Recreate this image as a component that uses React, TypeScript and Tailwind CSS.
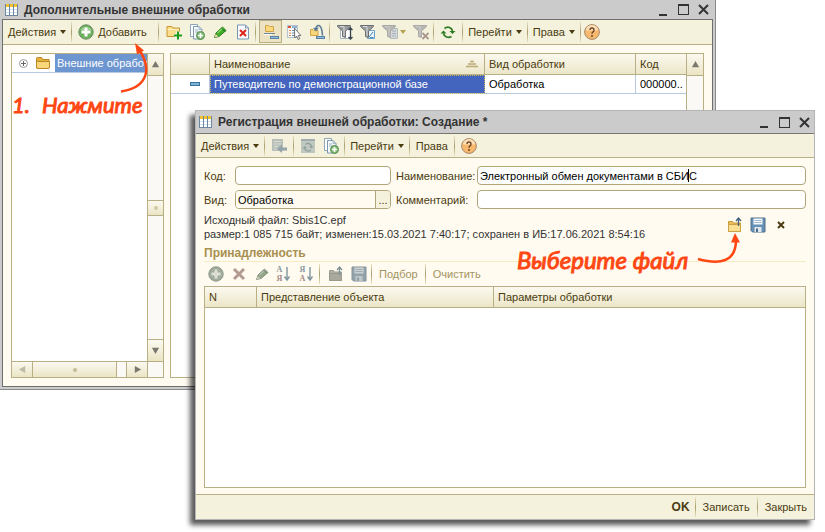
import type { ReactNode } from "react";

const iconBox = "h-4 w-4 shrink-0";

function GridIcon() {
  return (
    <svg className={iconBox} viewBox="0 0 16 16" aria-hidden="true">
      {[2, 6, 10].map((x) => (
        <g key={x}>
          <rect x={x - 0.5} y="2.5" width="4" height="11" fill="#fff" stroke="#6d87a0" />
          <rect x={x} y="2" width="3" height="3" fill="#f2c230" />
          <path d={`M${x} 7.5h3M${x} 10.500h3`} stroke="#d4e4f0" />
        </g>
      ))}
    </svg>
  );
}

function AddIcon({ muted = false }: { muted?: boolean }) {
  return (
    <svg className={iconBox} viewBox="0 0 16 16" aria-hidden="true">
      <circle cx="8" cy="8" r="7.2" fill={muted ? "#a3ab9c" : "#6cb15e"} stroke={muted ? "#8f978c" : "#6d8d66"} />
      {!muted && <path d="M2.5 6a6 5 0 0 1 11 0Z" fill="#b5dba9" opacity=".7" />}
      <path d="M8 3.5v9M3.5 8h9" stroke={muted ? "#dde0d6" : "#fff"} strokeWidth="3" />
    </svg>
  );
}

function FolderIcon() {
  return (
    <svg className={iconBox} viewBox="0 0 16 16" aria-hidden="true">
      <path d="M1.5 13V3.5q0-1 1-1h4l1.500 2h6V13Z" fill="#e5b13d" stroke="#b98724" />
      <path d="M1.500 6.500h13v5.500q0 1.500-1.500 1.500H3q-1.500 0-1.500-1.500Z" fill="#fbd77b" stroke="#b98724" />
    </svg>
  );
}

function FolderAddIcon() {
  return (
    <svg className={iconBox} viewBox="0 0 16 16" aria-hidden="true">
      <path d="M1 12.500V2.500h5l1 1.500h6.500v8.500Z" fill="#fbdd8c" stroke="#c8962f" />
      <path d="M1.500 5.500h11.500" stroke="#fff0bd" />
      <path d="M12 7.500v8M8 11.500h8" stroke="#f5f1de" strokeWidth="4" />
      <path d="M12 7.500v8M8 11.500h8" stroke="#1e9b1e" strokeWidth="2" />
    </svg>
  );
}

function CopyAddIcon() {
  return (
    <svg className={iconBox} viewBox="0 0 16 16" aria-hidden="true">
      <path d="M1.500.5h7v12h-7Z" fill="#fff" stroke="#8ea6b8" />
      <path d="M4.500 2.500h5.500l3 3v9.500H4.500Z" fill="#f4f8fb" stroke="#7c99ae" />
      <path d="M10 2.500v3h3M6 6h3M6 8h4" fill="none" stroke="#9fb6c6" />
      <circle cx="11.500" cy="11.500" r="4" fill="#7dba6f" stroke="#5c9157" />
      <path d="M11.500 9v5M9 11.500h5" stroke="#fff" strokeWidth="1.700" />
    </svg>
  );
}

function PencilIcon({ muted = false }: { muted?: boolean }) {
  return (
    <svg className={iconBox} viewBox="0 0 16 16" aria-hidden="true">
      <path d="M2.500 13.500 4 9l6.500-6 3.500 3.500-7 6Z" fill={muted ? "#93a58b" : "#3faa2c"} stroke={muted ? "#87977f" : "#267d19"} />
      <path d="m5.500 9 5.500-5" stroke={muted ? "#b2beaa" : "#8cdc71"} strokeWidth="1.300" />
      <path d="m2.500 13.500 1-3.500 3 2.500Z" fill={muted ? "#c6c8bd" : "#ead2a1"} />
      <path d="m9.500 4 3.500 3.500" stroke={muted ? "#75866e" : "#1d6c14"} />
    </svg>
  );
}

function DeleteIcon() {
  return (
    <svg className={iconBox} viewBox="0 0 16 16" aria-hidden="true">
      <path d="M2.500 1h8l3 3v11h-11Z" fill="#f7fbff" stroke="#7797b2" />
      <path d="M10.500 1v3h3" fill="none" stroke="#7797b2" />
      <path d="m5 6 6 6M11 6l-6 6" stroke="#dc2416" strokeWidth="2" />
    </svg>
  );
}

function HierarchyIcon() {
  return (
    <svg className={iconBox} viewBox="0 0 16 16" aria-hidden="true">
      <path d="M2.500 1.500h3l1 1h4v5h-8Z" fill="#fbd77b" stroke="#d0a548" />
      <path d="M1 9.500h11" stroke="#6f8290" />
      <path d="M1 10.500h8" stroke="#fff" />
      <rect x="7.500" y="12.500" width="8" height="2" fill="#8fbbe0" stroke="#5a83a5" />
    </svg>
  );
}

function ListCursorIcon() {
  return (
    <svg className={iconBox} viewBox="0 0 16 16" aria-hidden="true">
      <rect x="1.500" y="1.500" width="10" height="12" fill="#f4f8fb" stroke="#b4c3cf" />
      <path d="M2 3h3" stroke="#d9583b" strokeWidth="2" />
      <path d="M6 3h5" stroke="#8fb4d3" strokeWidth="2" />
      <path d="M3 6.500h2M3 9h2M3 11.500h2" stroke="#e08a4a" />
      <path d="M6 6.500h5M6 9h4M6 11.500h3" stroke="#6c8ca5" />
      <path d="m8.500 4 .2 10 2-2 1.500 3.500 1.600-.8-1.500-3.200h2.500Z" fill="#fff" stroke="#555" strokeWidth=".8" />
    </svg>
  );
}

function MoveGroupIcon() {
  return (
    <svg className={iconBox} viewBox="0 0 16 16" aria-hidden="true">
      <path d="M1.500 5.500h2.500l1 1h4v5H1.500Z" fill="#fbd77b" stroke="#d0a548" />
      <path d="M7 4.500Q7.500 1 10 1.500q2.800.5 3.500 10" fill="none" stroke="#5b7b93" strokeWidth="1.600" />
      <path d="m4 4 6-.5-3 4Z" fill="#5b7b93" />
      <rect x="7.500" y="12.500" width="8" height="2" fill="#8fbbe0" stroke="#5a83a5" />
    </svg>
  );
}

function FilterIcon({ kind }: { kind: "sort" | "current" | "history" | "clear" }) {
  const muted = kind === "history" || kind === "clear";
  return (
    <svg className={iconBox} viewBox="0 0 16 16" aria-hidden="true">
      {kind === "sort" && <path d="M3.500 3.500h10v11h-10Z" fill="#fff" stroke="#a4b4c0" />}
      {kind === "current" && <path d="M7.500 6.500h7v8h-7Z" fill="#eef6fc" stroke="#6b9fc9" />}
      {kind === "history" && <path d="M8.500 4.500h7v10h-7Z" fill="#d6dadb" stroke="#b4bbbe" />}
      {kind === "history" && <path d="M10 7h4M10 9.500h4M10 12h4" stroke="#a2adb3" />}
      <path d="M.5 1.500h13v1L8.500 7v6.500l-3-1V7L.5 2.500Z" fill={muted ? "#b7b7b5" : "#9a9c9e"} stroke={muted ? "#a8a8a6" : "#6b6d70"} />
      <path d="M3 2.500h4L7 7v5" fill="none" stroke={muted ? "#cccbc7" : "#d8dcdc"} />
      {kind === "sort" && <path d="M13.500 4v11M11.500 6l2-2 2 2M11.500 13l2 2 2-2" fill="none" stroke="#33414d" strokeWidth="1.300" />}
      {kind === "current" && <path d="m9 13 4-5M10 13.500h3.500" stroke="#4285bb" />}
      {kind === "clear" && <path d="m9.500 9 6 6M15.500 9l-6 6" stroke="#a8968f" strokeWidth="1.800" />}
    </svg>
  );
}

function RefreshIcon({ muted = false }: { muted?: boolean }) {
  const c = muted ? "#8b9f9b" : "#2c7a22";
  return (
    <svg className={iconBox} viewBox="0 0 16 16" aria-hidden="true">
      {muted && <rect x="1" y="1" width="14" height="14" fill="#bfc7c0" />}
      {muted && <path d="M1 2h14" stroke="#a2adac" strokeWidth="2" />}
      <g transform={muted ? "translate(2 3) scale(.75)" : undefined}>
        <path d="M4.500 4.500Q7 2.500 9.500 3.500T12.500 7M11.500 12.500Q9 14 6.500 13T3.500 9.500" fill="none" stroke={c} strokeWidth="1.700" />
        <path d="M9.500 7H15.500L12.500 10ZM6.500 9.500H.5L3.500 6.500Z" fill={c} />
      </g>
    </svg>
  );
}

function HelpIcon() {
  return (
    <svg className={iconBox} viewBox="0 0 16 16" aria-hidden="true">
      <circle cx="8" cy="8" r="7.400" fill="#f8b96e" stroke="#a8876a" />
      <path d="M2 6.500a6 5.500 0 0 1 12 0Z" fill="#fde0b8" />
      <path d="M6 6q0-2 2-2t2 2Q10 7.300 9 8q-1 .5-1 1.800" fill="none" stroke="#6b4628" strokeWidth="1.400" />
      <circle cx="8" cy="12" r="1" fill="#6b4628" />
    </svg>
  );
}

function WriteBackIcon() {
  return (
    <svg className={iconBox} viewBox="0 0 16 16" aria-hidden="true">
      <path d="M1 1h11v12H1Z" fill="#b9c0ba" />
      <path d="M3 3.500h7M3 6h7M3 8.500h4M3 11h3" stroke="#d8dcd3" />
      <path d="M16 9.500h-5V6.500L6 11l5 4v-2.500h5Z" fill="#95a4ab" />
    </svg>
  );
}

function OpenFolderIcon({ muted = false }: { muted?: boolean }) {
  return (
    <svg className={iconBox} viewBox="0 0 16 16" aria-hidden="true">
      <path d="M1.500 14.500v-10h4l1 1.500h7v8.500Z" fill={muted ? "#b2b2a4" : "#e9bd57"} stroke={muted ? "#9b9d90" : "#c6993b"} />
      <path d="M1.500 7.500h12v7h-12Z" fill={muted ? "#a9aa9d" : "#fbdf92"} stroke={muted ? "#989a8e" : "#cda044"} />
      <path d="M11.500 9V1.500M9 4l2.500-3L14 4" fill="none" stroke={muted ? "#7e9094" : "#3f617c"} strokeWidth="1.300" />
    </svg>
  );
}

function SaveIcon({ muted = false }: { muted?: boolean }) {
  return (
    <svg className={iconBox} viewBox="0 0 16 16" aria-hidden="true">
      <path d="M1 1h14v14H2.500L1 13.500Z" fill={muted ? "#93a3ab" : "#6690b5"} stroke={muted ? "#81929a" : "#4f6f8c"} />
      <path d="M3.500 1.500h9v6h-9Z" fill={muted ? "#ccd3d2" : "#f5f9fc"} />
      <path d="M4.500 3.500h7M4.500 5.500h7" stroke={muted ? "#9eabb0" : "#9fb9cf"} />
      <path d="M4.500 10h7v5h-7Z" fill={muted ? "#c1c9c8" : "#e2e8ec"} />
      <path d="M6 11.500h2V15H6Z" fill={muted ? "#8fa0a7" : "#496e8d"} />
    </svg>
  );
}

function CrossIcon() {
  return (
    <svg className={iconBox} viewBox="0 0 16 16" aria-hidden="true">
      <path d="m3 3 10 10M13 3 3 13" stroke="#b39a90" strokeWidth="3" />
    </svg>
  );
}

function SortIcon({ first, second }: { first: string; second: string }) {
  return (
    <span className="flex h-[18px] w-4 items-center">
      <span className="flex flex-col font-['Liberation_Serif',serif] text-[8px] leading-[9px] font-bold">
        <span className="text-[#8797a0]">{first}</span>
        <span className="text-[#a48a86]">{second}</span>
      </span>
      <svg className="ml-px h-4 w-2" viewBox="0 0 8 16" aria-hidden="true">
        <path d="M4 1v12M1.500 10.500 4 14l2.500-3.500" fill="none" stroke="#7f969f" strokeWidth="1.400" />
      </svg>
    </span>
  );
}

function Caret() {
  return <span className="border-x-3 border-t-4 border-x-transparent border-t-[#4a3c10]" />;
}

function Separator() {
  return <span className="h-5 w-px shrink-0 bg-linear-to-b from-[#e9e3c4] via-[#a99d6b] to-[#e9e3c4]" />;
}

function IconButton({ label, children, width = "w-[23px]" }: { label: string; children: ReactNode; width?: string }) {
  return (
    <button type="button" aria-label={label} className={`flex h-6 shrink-0 items-center justify-center ${width}`}>
      {children}
    </button>
  );
}

function MenuButton({ children, caret = false, pad = "px-[5px]" }: { children: ReactNode; caret?: boolean; pad?: string }) {
  return (
    <button type="button" className={`flex h-6 items-center gap-1 whitespace-nowrap ${pad}`}>
      {children}
      {caret && <Caret />}
    </button>
  );
}

function TitleBar({ title, height }: { title: string; height: string }) {
  return (
    <header className={`flex shrink-0 items-center bg-[#cbcbcb] pl-[2px] text-[#333] ${height}`}>
      <GridIcon />
      <h1 className="ml-1 flex-1 text-[12px] font-bold whitespace-nowrap">{title}</h1>
      <button type="button" aria-label="Свернуть" className="flex h-4 w-5 items-end justify-center pb-[2px]">
        <span className="h-[2px] w-2 bg-[#333]" />
      </button>
      <button type="button" aria-label="Развернуть" className="flex h-4 w-5 items-center justify-center">
        <span className="h-[11px] w-[11px] border border-t-2 border-[#333]" />
      </button>
      <button type="button" aria-label="Закрыть окно" className="flex h-4 w-5 items-center justify-center">
        <svg className="h-[11px] w-[11px]" viewBox="0 0 11 11"><path d="m1 1 9 9M10 1l-9 9" stroke="#333" strokeWidth="2" /></svg>
      </button>
    </header>
  );
}

const headFill = "bg-linear-to-b from-[#fbf9f0] to-[#ebe5c5]";
const line = "border-[#b9af85]";

function ScrollButton({ dir, faded = false }: { dir: "up" | "down" | "left" | "right"; faded?: boolean }) {
  const paths = { up: "M5 1 9 8H1Z", down: "M1 2h8L5 9Z", left: "M8 1v8L1 5Z", right: "M2 1v8l7-4Z" };
  const vertical = dir === "up" || dir === "down";
  return (
    <button type="button" aria-label={`Прокрутка: ${dir}`} className={`flex shrink-0 items-center justify-center ${headFill} ${line} ${vertical ? "h-[22px] w-full" : "h-full w-[21px]"} ${dir === "up" ? "border-b" : ""} ${dir === "down" ? "border-t" : ""} ${dir === "left" ? "border-r" : ""} ${dir === "right" ? "border-l" : ""}`}>
      <svg className="h-[9px] w-[9px]" viewBox="0 0 10 10"><path d={paths[dir]} fill={faded ? "#bdb9a2" : "#7a776c"} /></svg>
    </button>
  );
}

function ListWindow() {
  return (
    <section className="absolute top-0 right-[109px] left-0 flex h-[390px] flex-col border-r border-b border-[#8a8a8a] bg-[#cbcbcb] pr-[2px] pb-[2px] pl-[2px]">
      <TitleBar title="Дополнительные внешние обработки" height="h-[19px]" />
      <div className="flex min-h-0 flex-1 flex-col border border-[#6f6f6f] bg-[#fffbf0]">
        <div className={`flex h-[25px] shrink-0 items-center border-b bg-[#f4f1dd] ${line}`}>
          <MenuButton caret>Действия</MenuButton>
          <Separator />
          <button type="button" className="flex h-6 w-[86px] items-center gap-1 pl-[6px]">
            <AddIcon />
            <span><span className="underline">Д</span>обавить</span>
          </button>
          <Separator />
          <div className="flex pr-px pl-[3px]">
            <IconButton label="Новая группа"><FolderAddIcon /></IconButton>
            <IconButton label="Скопировать"><CopyAddIcon /></IconButton>
            <IconButton label="Изменить"><PencilIcon /></IconButton>
            <IconButton label="Удалить"><DeleteIcon /></IconButton>
          </div>
          <Separator />
          <div className="flex pr-px pl-[3px]">
            <button type="button" aria-label="Иерархический просмотр" aria-pressed="true" className={`flex h-[23px] w-[23px] items-center justify-center border bg-[#ebe3c3] ${line}`}>
              <HierarchyIcon />
            </button>
            <IconButton label="Выбрать"><ListCursorIcon /></IconButton>
            <IconButton label="Переместить в группу"><MoveGroupIcon /></IconButton>
          </div>
          <Separator />
          <div className="flex pr-px pl-[3px]">
            <IconButton label="Отбор и сортировка"><FilterIcon kind="sort" /></IconButton>
            <IconButton label="Отбор по значению"><FilterIcon kind="current" /></IconButton>
            <IconButton label="История отборов" width="w-[30px]"><FilterIcon kind="history" /><span className="ml-[2px] border-x-3 border-t-4 border-x-transparent border-t-[#b3a050]" /></IconButton>
            <IconButton label="Отключить отбор"><FilterIcon kind="clear" /></IconButton>
          </div>
          <Separator />
          <IconButton label="Обновить" width="w-[28px]"><RefreshIcon /></IconButton>
          <Separator />
          <MenuButton caret>Перейти</MenuButton>
          <Separator />
          <MenuButton caret>Права</MenuButton>
          <Separator />
          <IconButton label="Справка"><HelpIcon /></IconButton>
        </div>

        <div className="flex min-h-0 flex-1 gap-[6px] px-2 pt-2 pb-2">
          <div className={`flex w-[153px] shrink-0 flex-col border bg-white ${line}`}>
            <div className="flex min-h-0 flex-1">
              <div className="min-w-0 flex-1">
                <div className="flex h-[19px] items-center border-b border-[#b6c8e2]">
                  <svg className="ml-[7px] h-[9px] w-[9px] shrink-0" viewBox="0 0 9 9"><circle cx="4.500" cy="4.500" r="4" fill="#fff" stroke="#999" /><path d="M2 4.500h5M4.500 2v5" stroke="#666" /></svg>
                  <span className="ml-[7px] flex"><FolderIcon /></span>
                  <span className="ml-1 h-full min-w-0 flex-1 overflow-hidden bg-[#6d96d0] pl-[2px] leading-[18px] whitespace-nowrap text-white">Внешние обработки</span>
                </div>
              </div>
              <div className={`flex w-4 flex-col border-l bg-[#faf9f5] ${line}`}>
                <ScrollButton dir="up" />
                <div className="flex-1" />
                <div className={`h-4 border-y ${line} ${headFill} flex items-center justify-center`}><span className="h-1 w-1 rounded-full bg-[#cfc9a8]" /></div>
                <div className="flex-1" />
                <ScrollButton dir="down" />
              </div>
            </div>
            <div className={`flex h-4 border-t bg-[#faf9f5] ${line}`}>
              <ScrollButton dir="left" faded />
              <div className={`flex w-[84px] items-center justify-center border-r ${line} ${headFill}`}><span className="h-1 w-1 rounded-full bg-[#c3bc98]" /></div>
              <div className="flex-1" />
              <ScrollButton dir="right" />
              <div className={`w-4 border-l ${line}`} />
            </div>
          </div>

          <div className={`flex min-w-0 flex-1 border bg-white ${line}`}>
            <div className="min-w-0 flex-1">
              <table className="w-full table-fixed border-separate border-spacing-0 text-left">
                <colgroup><col className="w-[39px]" /><col /><col className="w-[151px]" /><col className="w-[50px]" /></colgroup>
                <thead>
                  <tr className={`h-[21px] text-[#4a3c10] ${headFill}`}>
                    <th aria-label="Состояние" className={`border-r border-b ${line}`} />
                    <th className={`border-r border-b px-1 font-normal ${line}`}>
                      <span className="flex items-center justify-between">Наименование
                        <svg className="mr-[2px] h-2 w-3" viewBox="0 0 12 8"><path d="M4 1.500h4M2 4h8M0 6.500h12" stroke="#b8ac78" strokeWidth="1.500" /></svg>
                      </span>
                    </th>
                    <th className={`border-r border-b px-1 font-normal ${line}`}>Вид обработки</th>
                    <th className={`border-b px-1 font-normal ${line}`}>Код</th>
                  </tr>
                </thead>
                <tbody>
                  <tr className="h-[19px] text-black">
                    <td className="border-r border-b border-[#b6c8e2]"><span className="ml-[19px] block h-1 w-[10px] border border-[#38739c] bg-[#7fb2d4]" /></td>
                    <td className="border-b border-[#b6c8e2] bg-[#4465bd] px-1 text-white outline-1 -outline-offset-1 outline-[#d2bd58] outline-dotted">Путеводитель по демонстрационной базе</td>
                    <td className="border-r border-b border-[#b6c8e2] px-1">Обработка</td>
                    <td className="border-b border-[#b6c8e2] pl-1 whitespace-nowrap">000000..</td>
                  </tr>
                </tbody>
              </table>
            </div>
            <div className={`w-[17px] border-l bg-[#faf9f5] ${line}`}><ScrollButton dir="up" /></div>
          </div>
        </div>
      </div>
    </section>
  );
}

const field = "h-[19px] w-full min-w-0 rounded-[4px] border border-[#b0a67a] bg-white px-[2px] text-black outline-none";

function FormWindow() {
  return (
    <section className="absolute top-[110px] right-[10px] bottom-[12px] left-[195px] flex flex-col border border-[#b5b5b5] bg-[#fffbf0] shadow-[-5px_5px_5px_0px_rgba(0,0,0,0.65)]">
      <TitleBar title="Регистрация внешней обработки: Создание *" height="h-[22px]" />
      <div className="flex h-[25px] shrink-0 items-center border-t border-b border-t-[#777] border-b-[#b9af85] bg-[#f4f1dd]">
        <MenuButton caret>Действия</MenuButton>
        <Separator />
        <IconButton label="Записать и закрыть" width="w-[28px]"><WriteBackIcon /></IconButton>
        <Separator />
        <div className="flex px-[2px]">
          <IconButton label="Перечитать"><RefreshIcon muted /></IconButton>
          <IconButton label="Скопировать"><CopyAddIcon /></IconButton>
        </div>
        <Separator />
        <MenuButton caret>Перейти</MenuButton>
        <Separator />
        <MenuButton pad="px-[6px]">Права</MenuButton>
        <Separator />
        <IconButton label="Справка" width="w-[28px]"><HelpIcon /></IconButton>
      </div>

      <div className="flex min-h-0 flex-1 flex-col px-2 pt-2 pb-[6px]">
        <div className="grid grid-cols-[31px_156px_86px_1fr] items-center gap-y-[5px]">
          <label htmlFor="code">Код:</label>
          <input id="code" className={field} />
          <label htmlFor="name" className="pl-[5px]">Наименование:</label>
          <div className="relative flex">
            <input id="name" className={field} defaultValue="Электронный обмен документами в СБИС" />
            <span className="absolute top-[3px] left-[211px] h-[13px] w-px bg-black" />
          </div>
          <label htmlFor="kind">Вид:</label>
          <div className="flex h-[19px] overflow-hidden rounded-[4px] border border-[#b0a67a]">
            <input id="kind" className="min-w-0 flex-1 bg-[#fffbf0] px-[2px] text-black outline-none" defaultValue="Обработка" />
            <button type="button" aria-label="Выбрать вид" className="w-[15px] border-l border-[#b0a67a] bg-[#f4f1dd] leading-[14px]">...</button>
          </div>
          <label htmlFor="comment" className="pl-[5px]">Комментарий:</label>
          <input id="comment" className={field} />
        </div>

        <div className="mt-1 flex h-[32px]">
          <p className="flex-1 leading-[14px] text-[#333]">Исходный файл: Sbis1C.epf<br />размер:1 085 715 байт; изменен:15.03.2021 7:40:17; сохранен в ИБ:17.06.2021 8:54:16</p>
          <div className="flex pr-[14px]">
            <IconButton label="Открыть файл"><OpenFolderIcon /></IconButton>
            <IconButton label="Сохранить файл"><SaveIcon /></IconButton>
            <IconButton label="Удалить файл"><svg className="h-2 w-2" viewBox="0 0 8 8"><path d="m1 1 6 6M7 1 1 7" stroke="#4a3c10" strokeWidth="2" /></svg></IconButton>
          </div>
        </div>

        <h2 className="h-[17px] border-b border-[#f5ecc2] text-[12px] font-bold text-[#a98f50]">Принадлежность</h2>
        <div className="flex h-6 shrink-0 items-center text-[#a39361]">
          <IconButton label="Добавить объект"><AddIcon muted /></IconButton>
          <IconButton label="Удалить объект"><CrossIcon /></IconButton>
          <IconButton label="Изменить объект"><PencilIcon muted /></IconButton>
          <IconButton label="Сортировать по возрастанию"><SortIcon first="А" second="Я" /></IconButton>
          <IconButton label="Сортировать по убыванию"><SortIcon first="Я" second="А" /></IconButton>
          <Separator />
          <div className="flex pr-px pl-1">
            <IconButton label="Загрузить"><OpenFolderIcon muted /></IconButton>
            <IconButton label="Выгрузить"><SaveIcon muted /></IconButton>
          </div>
          <Separator />
          <MenuButton pad="px-[7px]">Подбор</MenuButton>
          <Separator />
          <MenuButton pad="px-[7px]">Очистить</MenuButton>
        </div>

        <div className={`min-h-0 flex-1 border bg-white ${line}`}>
          <table className="w-full table-fixed border-separate border-spacing-0 text-left">
            <colgroup><col className="w-[52px]" /><col className="w-[237px]" /><col /></colgroup>
            <thead>
              <tr className={`h-[21px] text-[#4a3c10] ${headFill}`}>
                <th className={`border-r border-b px-1 font-normal ${line}`}>N</th>
                <th className={`border-r border-b px-1 font-normal ${line}`}>Представление объекта</th>
                <th className={`border-b px-1 font-normal ${line}`}>Параметры обработки</th>
              </tr>
            </thead>
          </table>
        </div>
      </div>

      <footer className={`flex h-[25px] shrink-0 items-center justify-end border-t bg-[#f4f1dd] ${line}`}>
        <button type="button" className="px-[5px] text-[12px] font-bold">OK</button>
        <Separator />
        <button type="button" className="px-[7px]">Записать</button>
        <Separator />
        <button type="button" className="px-[7px]">Закрыть</button>
      </footer>
    </section>
  );
}

const note = "absolute font-['Lato',sans-serif] leading-[34px] whitespace-nowrap text-[#ff4713] italic [-webkit-text-stroke:1px_#ff4713]";

export default function App() {
  return (
    <main className="relative min-h-screen overflow-hidden bg-white font-['Liberation_Sans',Arial,sans-serif] text-[11px] leading-[16px] text-[#4a3c10]">
      <ListWindow />
      <FormWindow />
      <p className={`top-[88px] left-[12px] flex gap-3 text-[22px] ${note}`}><span>1.</span><span>Нажмите</span></p>
      <p className={`top-[243px] left-[517px] text-[24px] ${note}`}>Выберите файл</p>
      <svg className="absolute top-[40px] left-[115px] h-[55px] w-[40px]" viewBox="0 0 40 55" aria-hidden="true">
        <path d="M6 51.500C30 48 38 32 25 11" fill="none" stroke="#ff4713" strokeWidth="2.500" />
        <path d="m20 3 9 7.500-7 4Z" fill="#ff4713" />
      </svg>
      <svg className="absolute top-[230px] left-[694px] h-[36px] w-[50px]" viewBox="0 0 50 36" aria-hidden="true">
        <path d="M4 29C26 35 42 32 42 10" fill="none" stroke="#ff4713" strokeWidth="2.500" />
        <path d="m41 3 5 9.500h-9Z" fill="#ff4713" />
      </svg>
    </main>
  );
}
